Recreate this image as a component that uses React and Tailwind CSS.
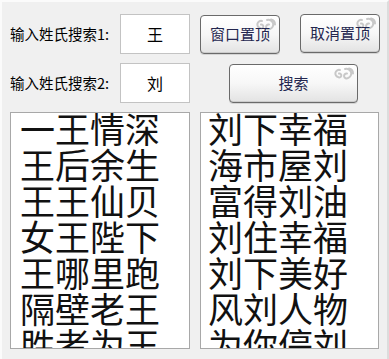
import React from 'react';

const cjk = "font-['Noto_Sans_CJK_SC',sans-serif]";

const Swirl = () => (
  <svg
    className="absolute right-[2px] top-[1px]"
    width="27"
    height="16"
    viewBox="0 0 27 16"
    fill="none"
    stroke="#c8c8c8"
    strokeWidth="2"
    strokeLinecap="round"
  >
    {/* big curl on the right */}
    <path d="M17 3 a4.5 4.5 0 1 1 3 9 a2.5 2.5 0 1 1 -1 -4.5" />
    {/* small curl on the left */}
    <path d="M12 4 a3.5 3.5 0 1 0 -2 7 a2 2 0 1 0 1 -3.5" />
    <path d="M21 2.5 q4 1 4 5" />
  </svg>
);

const Btn = ({ label, className }) => (
  <button
    className={`relative rounded-[4px] border border-[#6a6a6a] bg-gradient-to-b from-[#ffffff] via-[#f7f7f7] to-[#e3e3e3] shadow-[0_1px_0_#d4d4d4,inset_0_-1px_0_#cccccc] text-[15px] text-[#23264f] ${cjk} ${className}`}
  >
    <Swirl />
    <span className="relative">{label}</span>
  </button>
);

const Field = ({ value }) => (
  <div
    className={`flex h-[40px] w-[70px] items-center justify-center border border-[#c3c3c3] bg-white text-[16px] text-black ${cjk}`}
  >
    {value}
  </div>
);

const Label = ({ text }) => (
  <div className={`w-[110px] text-[14.5px] text-black ${cjk}`}>{text}</div>
);

const NameList = ({ names, className }) => (
  <div className={`h-[237px] overflow-hidden border border-[#a8a8a8] bg-white ${className}`}>
    <div className="-mt-[3px]">
      {names.map((n, i) => (
        <div key={i} className={`text-[35px] leading-[36px] text-[#111] ${cjk}`}>
          {n}
        </div>
      ))}
    </div>
  </div>
);

const App = () => {
  const left = ['一王情深', '王后余生', '王王仙贝', '女王陛下', '王哪里跑', '隔壁老王', '胜者为王'];
  const right = ['刘下幸福', '海市屋刘', '富得刘油', '刘住幸福', '刘下美好', '风刘人物', '为你停刘'];

  return (
    <div className="h-[359px] w-[389px] overflow-hidden border-l-2 border-t-2 border-r-2 border-l-[#fbfbfb] border-t-[#fbfbfb] border-r-[#dcdcdc] bg-[#f0f0f0]">
      {/* Row 1 */}
      <div className="flex items-center pl-[8px] pt-[11px]">
        <Label text="输入姓氏搜索1:" />
        <Field value="王" />
        <Btn label="窗口置顶" className="ml-[10px] mt-[2px] h-[39px] w-[80px]" />
        <Btn label="取消置顶" className="ml-[20px] h-[39px] w-[80px]" />
      </div>
      {/* Row 2 */}
      <div className="mt-[9px] flex items-center pl-[8px]">
        <Label text="输入姓氏搜索2:" />
        <Field value="刘" />
        <Btn label="搜索" className="ml-[39px] h-[39px] w-[129px]" />
      </div>
      {/* Lists */}
      <div className="mt-[9px] flex gap-[10px] pl-[8px]">
        <NameList names={left} className="w-[180px] pl-[9px]" />
        <NameList names={right} className="w-[179px] pl-[7px]" />
      </div>
    </div>
  );
};

export default App;
